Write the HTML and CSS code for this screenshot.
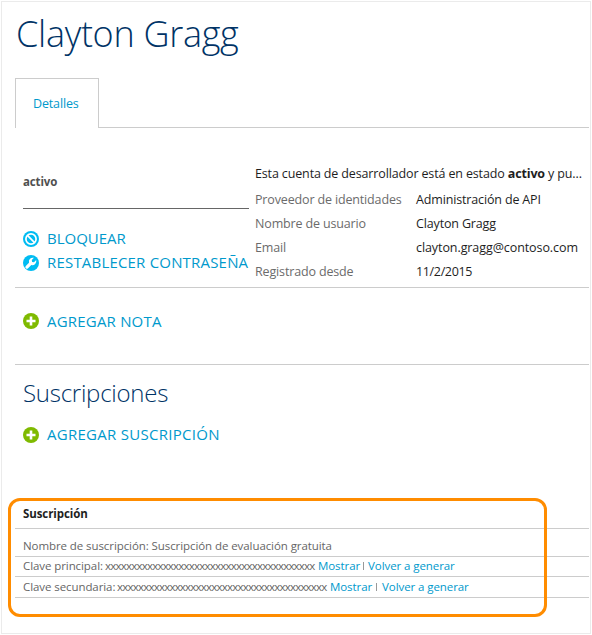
FILE: index.html
```html
<!DOCTYPE html>
<html lang="es">
<head>
<meta charset="utf-8">
<title>Clayton Gragg</title>
<link rel="stylesheet" href="styles.css">
</head>
<body>
<main class="frame">
  <h1 class="title"><span>Clayton Gragg</span></h1>
  <nav class="tabs"><a class="tab"><span>Detalles</span></a><div class="tab-rest"></div></nav>
  <section class="account">
    <div class="side">
      <div class="status"><span>activo</span></div>
      <div class="actions">
        <a class="action block"><svg class="icon" viewBox="0 0 16 16"><circle cx="8" cy="8" r="8" fill="#00bcf2"/><circle cx="8" cy="8" r="5.1" fill="none" stroke="#fff" stroke-width="1.700"/><path d="M4.400 4.400 11.600 11.600" stroke="#fff" stroke-width="1.700"/></svg><span>BLOQUEAR</span></a>
        <a class="action reset"><svg class="icon" viewBox="0 0 16 16"><circle cx="8" cy="8" r="8" fill="#00bcf2"/><path d="M13.200 5.100 11 7.200 9.100 6.900 8.800 5 10.900 2.800A4 4 0 0 0 6 7.700L2.800 10.900A1.600 1.600 0 0 0 5.100 13.200L8.300 10A4 4 0 0 0 13.200 5.100Z" fill="#fff"/></svg><span>RESTABLECER CONTRASEÑA</span></a>
      </div>
    </div>
    <div class="info">
      <p class="summary"><span>Esta cuenta de desarrollador está en estado <b>activo</b> y pu...</span></p>
      <dl class="facts">
        <dt>Proveedor de identidades</dt><dd>Administración de API</dd>
        <dt>Nombre de usuario</dt><dd>Clayton Gragg</dd>
        <dt>Email</dt><dd class="email">clayton.gragg@contoso.com</dd>
        <dt>Registrado desde</dt><dd class="date">11/2/2015</dd>
      </dl>
    </div>
  </section>
  <section class="notes">
    <a class="action note"><svg class="icon" viewBox="0 0 16 16"><circle cx="8" cy="8" r="8" fill="#7fba00"/><path d="M8 3.500V12.500M3.500 8H12.500" stroke="#fff" stroke-width="2.600"/></svg><span>AGREGAR NOTA</span></a>
  </section>
  <section class="subs">
    <h2 class="subtitle"><span>Suscripciones</span></h2>
    <a class="action addsub"><svg class="icon" viewBox="0 0 16 16"><circle cx="8" cy="8" r="8" fill="#7fba00"/><path d="M8 3.500V12.500M3.500 8H12.500" stroke="#fff" stroke-width="2.600"/></svg><span>AGREGAR SUSCRIPCIÓN</span></a>
  </section>
  <section class="list">
    <div class="highlight"></div>
    <div class="row head"><span>Suscripción</span></div>
    <div class="row name"><span>Nombre de suscripción: Suscripción de evaluación gratuita</span></div>
    <div class="row key1"><span class="label">Clave principal:</span><span class="mask">xxxxxxxxxxxxxxxxxxxxxxxxxxxxxxxxxxxxxxxx</span><a class="show">Mostrar</a><i class="bar"></i><a class="regen">Volver a generar</a></div>
    <div class="row key2"><span class="label">Clave secundaria:</span><span class="mask">xxxxxxxxxxxxxxxxxxxxxxxxxxxxxxxxxxxxxxxx</span><a class="show">Mostrar</a><i class="bar"></i><a class="regen">Volver a generar</a></div>
  </section>
</main>
</body>
</html>
```
FILE: styles.css
```css
* { box-sizing: border-box; }
body { margin: 0; background: #fff; font: 12.5px "Open Sans", "Noto Sans", sans-serif; color: #1e1e1e; }
h1, h2, p, dl, dd { margin: 0; font-weight: 400; }
.frame { margin: 1px; width: 590px; height: 633px; border: 1px solid #ebebeb; padding: 0 1px 0 13px; }
.title { height: 76px; padding: 7px 0 0 1px; font-size: 36px; line-height: 50px; font-weight: 300; letter-spacing: -0.3px; color: #003366; white-space: nowrap; }
.tabs { display: flex; height: 50px; }
.tab { width: 84px; border: 1px solid #ccc; border-bottom: 0; padding-left: 17px; line-height: 50px; letter-spacing: -0.15px; color: #0099cc; }
.tab-rest { flex: 1; border-bottom: 1px solid #ccc; }
.account { display: flex; height: 160px; border-bottom: 1px solid #ccc; white-space: nowrap; }
.side { flex: none; width: 234px; padding-left: 8px; }
.status { height: 81px; border-bottom: 1px solid #666; padding-top: 44px; line-height: 20px; font-size: 11.5px; letter-spacing: -0.15px; font-weight: 700; color: #505050; }
.actions { padding-top: 18px; }
.action { display: flex; align-items: center; height: 24px; color: #0099cc; font-size: 15px; line-height: 22px; white-space: nowrap; }
.action span { height: 24px; }
.reset span { letter-spacing: 0.19px; }
.note span { line-height: 24px; letter-spacing: 0.2px; }
.addsub span { letter-spacing: 0.28px; }
.icon { width: 16px; height: 16px; margin-right: 8px; flex: none; }
.info { padding: 34px 0 0 6px; }
.summary { height: 25px; line-height: 24px; letter-spacing: -0.14px; }
.facts { display: grid; grid-template-columns: 161px 1fr; grid-auto-rows: 24px; line-height: 26px; letter-spacing: -0.15px; }
.facts dt { color: #6b6b6b; }
.facts .email { letter-spacing: -0.08px; }
.facts .date { letter-spacing: -0.35px; }
.notes { height: 77px; padding: 21px 0 0 8px; border-bottom: 1px solid #ccc; }
.subs { height: 135px; padding: 12px 0 0 8px; }
.subtitle { height: 46px; font-size: 24px; line-height: 32px; font-weight: 300; letter-spacing: -0.25px; color: #003366; }
.list { position: relative; font-size: 11.5px; letter-spacing: -0.08px; color: #666; }
.highlight { position: absolute; z-index: 1; left: -7px; top: -2px; width: 539px; height: 119px; border: 3px solid #ff8c00; border-radius: 12px; }
.row { display: flex; padding-left: 8px; border-bottom: 1px solid #ccc; white-space: nowrap; }
.row a { color: #0099cc; }
.head { height: 29px; line-height: 28px; font-weight: 700; color: #1e1e1e; }
.name { height: 28px; line-height: 33px; }
.key1 { height: 20px; line-height: 17px; }
.key2 { height: 21px; line-height: 19px; }
.label { flex: none; width: 82px; }
.key2 .label { width: 94px; }
.mask { flex: none; width: 213px; letter-spacing: -0.78px; }
.bar { flex: none; width: 1px; height: 8px; margin: 5px 4px 0 3px; background: #999; }
.key2 .bar { margin: 6px 5px 0 4px; }
```
